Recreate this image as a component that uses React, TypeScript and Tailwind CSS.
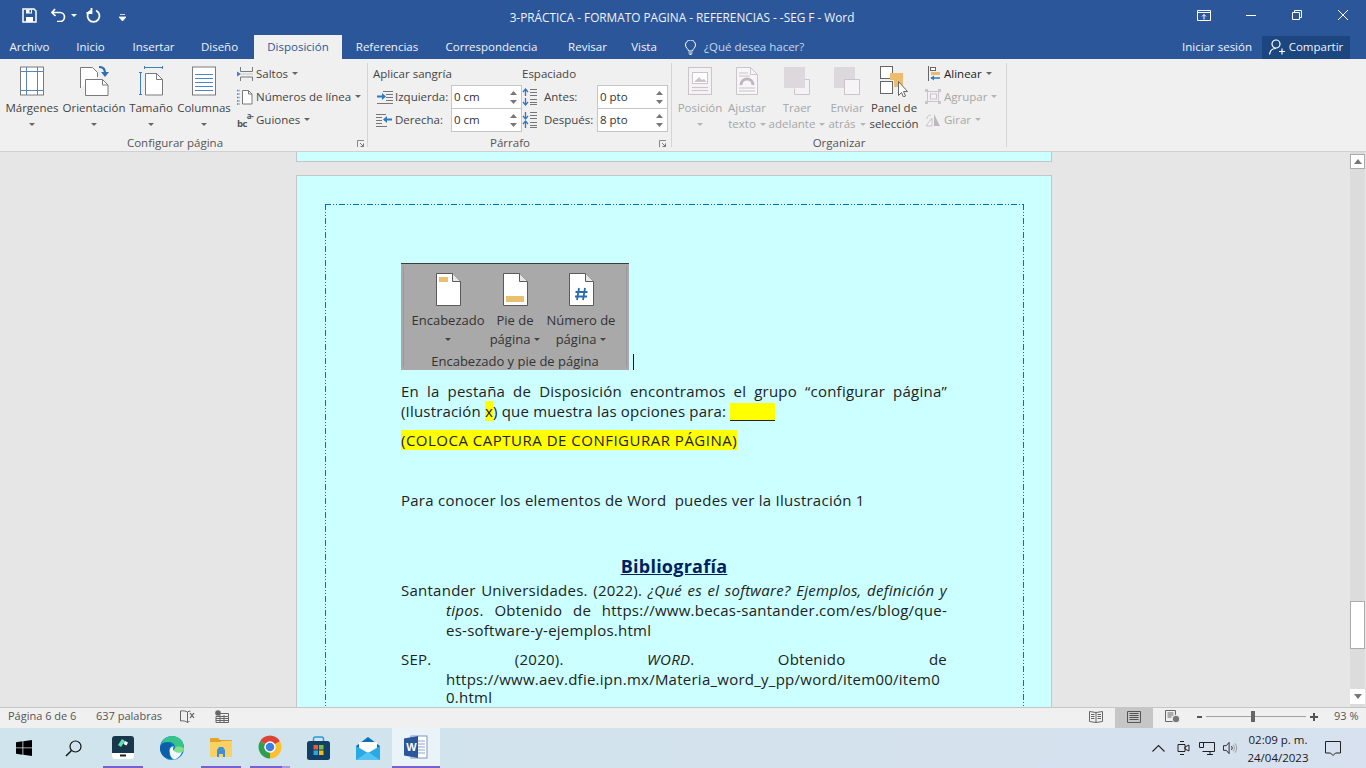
import React from "react";

const Caret = ({ color = "#666" }: { color?: string }) => (
  <svg width="6" height="3" viewBox="0 0 6 3" className="inline-block shrink-0">
    <path d="M0 0h6L3 3z" fill={color} />
  </svg>
);

// ---- ribbon icons ----
const MarginsIcon = () => (
  <svg width="24" height="30" viewBox="0 0 24 30" fill="none">
    <rect x="0.5" y="1" width="23" height="28" fill="#fff" stroke="#7a7a7a" />
    <path d="M6.5 1v28M17.5 1v28M0 5.5h24M0 24.5h24" stroke="#5b87b8" />
  </svg>
);
const OrientationIcon = () => (
  <svg width="30" height="30" viewBox="0 0 30 30" fill="none">
    <path d="M1.500 22V1.500h12l5 5V11" stroke="#7a7a7a" fill="#fff" />
    <path d="M6.500 29.500V13.500h17l5.500 5.500v10.500z" fill="#fff" stroke="#7a7a7a" />
    <path d="M23.500 13.500v5.500h5.500" stroke="#7a7a7a" />
    <path d="M20 1c4 0 6 2 6 6" stroke="#2f6fb5" strokeWidth="2.200" />
    <path d="M22 6h8l-4 5z" fill="#2f6fb5" />
  </svg>
);
const SizeIcon = () => (
  <svg width="25" height="30" viewBox="0 0 25 30" fill="none">
    <path d="M5.500 1.500h18M5.500 0v3M23.500 0v3M1.500 6v23M0 6.500h3M0 28.500h3" stroke="#3f7fc0" />
    <path d="M6.500 7.500h11l6 6v15.500h-17z" fill="#fff" stroke="#7a7a7a" />
    <path d="M17.500 7.500v6h6" stroke="#7a7a7a" />
  </svg>
);
const ColumnsIcon = () => (
  <svg width="24" height="30" viewBox="0 0 24 30" fill="none">
    <rect x="0.500" y="1" width="23" height="28" fill="#fff" stroke="#7a7a7a" />
    <path d="M3 8.500h18M3 12.500h18M3 16.500h18M3 20.500h18M3 24.500h18" stroke="#4d86c4" />
  </svg>
);
const BreaksIcon = () => (
  <svg width="16" height="16" viewBox="0 0 16 16" fill="none">
    <path d="M3.500 1v4.500h12V1M3.500 15v-4h12v4" stroke="#7a7a7a" />
    <path d="M0 5.500l4 2.500-4 2.500z" fill="#3f7fc0" />
    <path d="M4 8h12" stroke="#c8c8c8" />
  </svg>
);
const LineNumbersIcon = () => (
  <svg width="16" height="16" viewBox="0 0 16 16" fill="none">
    <path d="M0 1.500h3M0 5h3M0 8.500h3M0 12h3M0 15h3" stroke="#3f7fc0" strokeDasharray="1.500 1" strokeWidth="1.400" />
    <path d="M5.500 1.500h6l3.500 3.500v10h-9.500z" fill="#fff" stroke="#7a7a7a" />
    <path d="M11.500 1.500v3.500h3.500" stroke="#7a7a7a" />
  </svg>
);
const HyphenMark = () => (
  <div className="w-[17px] h-[16px] flex font-bold text-[#555] tracking-tighter">
    <span className="self-end text-[9.5px] leading-[8px]">bc</span>
    <span className="self-start text-[8px] leading-[8px]">a-</span>
  </div>
);
const IndentLeftIcon = () => (
  <svg width="17" height="14" viewBox="0 0 17 14" fill="none">
    <path d="M7 1.500h10M10 4.500h7M10 7.500h7M10 10.500h7M1 13.500h16" stroke="#777" />
    <path d="M1 6.500h6" stroke="#2f78c2" strokeWidth="2" />
    <path d="M6 3l4 3.500L6 10z" fill="#2f78c2" />
  </svg>
);
const IndentRightIcon = () => (
  <svg width="17" height="14" viewBox="0 0 17 14" fill="none">
    <path d="M0 1.500h10M0 4.500h6M0 7.500h6M0 10.500h6M0 13.500h11" stroke="#777" />
    <path d="M10 6.500h6" stroke="#2f78c2" strokeWidth="2" />
    <path d="M11 3L7 6.500l4 3.500z" fill="#2f78c2" />
  </svg>
);
const SpaceIcon = ({ flip }: { flip?: boolean }) => (
  <svg width="16" height="18" viewBox="0 0 16 18" fill="none">
    {flip ? (
      <path d="M3.500 1v6M1 5l2.500 3L6 5M3.500 11v6M1 13l2.500-3L6 13" stroke="#2f78c2" strokeWidth="1.300" />
    ) : (
      <path d="M3.500 2v6M1 4l2.500-3L6 4M3.500 10v6M1 14l2.500 3L6 14" stroke="#2f78c2" strokeWidth="1.300" />
    )}
    <path d="M8 1.500h7M8 4.500h7M8 7.500h7M8 11.500h7M8 14.500h7M8 16.500h7" stroke="#777" />
  </svg>
);
const Spin = () => (
  <div className="flex flex-col items-center gap-[5px] w-[13px]">
    <svg width="7" height="4" viewBox="0 0 7 4"><path d="M0 4h7L3.500 0z" fill="#777" /></svg>
    <svg width="7" height="4" viewBox="0 0 7 4"><path d="M0 0h7L3.500 4z" fill="#777" /></svg>
  </div>
);
const PositionIcon = () => (
  <svg width="24" height="28" viewBox="0 0 24 28" fill="none">
    <rect x="0.500" y="0.500" width="23" height="27" fill="#f4f2f4" stroke="#c9c5c9" />
    <rect x="4.500" y="5.500" width="15" height="11" fill="#fff" stroke="#c9c5c9" />
    <path d="M6 15l5-5 3 3 2-1 3 3z" fill="#c9c5c9" />
    <path d="M4 20.500h16M4 23.500h16" stroke="#c9c5c9" />
  </svg>
);
const WrapIcon = () => (
  <svg width="22" height="28" viewBox="0 0 22 28" fill="none">
    <path d="M0.500 0.500h14l7 7v20h-21z" fill="#f7f5f7" stroke="#c9c5c9" />
    <path d="M14.500 0.500v7h7" stroke="#c9c5c9" />
    <path d="M3 6h9M3 9h11M3 21h16M3 24h16" stroke="#c9c5c9" />
    <path d="M5 18c0-8 12-8 12 0" stroke="#bdb8bd" strokeWidth="3" />
  </svg>
);
const ForwardIcon = () => (
  <svg width="26" height="28" viewBox="0 0 26 28" fill="none">
    <path d="M10.500 21.500v6h15v-15h-5" fill="#f4f2f4" stroke="#c9c5c9" />
    <rect x="0" y="0" width="21" height="21" fill="#dcd8dc" />
  </svg>
);
const BackwardIcon = () => (
  <svg width="26" height="28" viewBox="0 0 26 28" fill="none">
    <rect x="0" y="0" width="21" height="21" fill="#dcd8dc" />
    <rect x="10.500" y="12.500" width="15" height="15" fill="#f6f4f6" stroke="#c9c5c9" />
  </svg>
);
const SelectionIcon = () => (
  <svg width="28" height="31" viewBox="0 0 28 31" fill="none">
    <rect x="0.500" y="0.500" width="12" height="12" fill="#fff" stroke="#666" />
    <rect x="0.500" y="15.500" width="12" height="12" fill="#fff" stroke="#666" />
    <rect x="10" y="7" width="13" height="7" fill="#edbd6e" />
    <rect x="14" y="7" width="9" height="14" fill="#edbd6e" />
    <path d="M18.500 15.500v14l3-3 2 4.500 2-1-2-4.500h4z" fill="#fff" stroke="#666" />
  </svg>
);
const AlignIcon = () => (
  <svg className="ml-[3px]" width="13" height="15" viewBox="0 0 13 15" fill="none">
    <path d="M0.500 0v15" stroke="#666" />
    <rect x="2.500" y="1.500" width="5" height="3" fill="#fff" stroke="#666" />
    <rect x="3" y="6" width="9" height="3" fill="#edbd6e" />
    <path d="M3 12h9" stroke="#2f78c2" strokeWidth="1.500" />
    <path d="M6 9.500L2.500 12 6 14.500z" fill="#2f78c2" />
  </svg>
);
const GroupIcon = () => (
  <svg width="16" height="15" viewBox="0 0 16 15" fill="none">
    <rect x="2.500" y="2.500" width="11" height="10" stroke="#c9c5c9" />
    <rect x="5.500" y="5" width="6" height="5" fill="#f4f2f4" stroke="#c9c5c9" />
    <path d="M0 0h3v3H0zM13 0h3v3h-3zM0 12h3v3H0zM13 12h3v3h-3z" fill="#c9c5c9" />
  </svg>
);
const RotateIcon = () => (
  <svg width="16" height="14" viewBox="0 0 16 14" fill="none">
    <path d="M1 13L7 5v8z" fill="#f4f2f4" stroke="#c9c5c9" />
    <path d="M9 1v12h6z" fill="#bdb8bd" />
    <path d="M2 6c0-3 2-4 4-4" stroke="#c9c5c9" />
  </svg>
);
const Launcher = () => (
  <svg width="7" height="7" viewBox="0 0 7 7" fill="none">
    <path d="M0.500 7V0.500H7" stroke="#8a8a8a" />
    <path d="M3 3l3.500 3.500M6.500 3.500v3h-3" stroke="#777" />
  </svg>
);

// ---- document picture icons ----
const HeaderPage = ({ kind }: { kind: "top" | "bottom" | "hash" }) => (
  <svg width="25" height="33" viewBox="0 0 25 33" fill="none">
    <path d="M0.500 0.500h16l8 8v24h-24z" fill="#fff" stroke="#5a5a5a" />
    <path d="M16.500 0.500v8h8" fill="#e8e8e8" stroke="#5a5a5a" />
    {kind === "top" && <rect x="3" y="4" width="9" height="5" fill="#e9c06f" />}
    {kind === "bottom" && <rect x="3" y="23" width="18" height="6" fill="#e9c06f" />}
    {kind === "hash" && (
      <path d="M10 15l-2 12M16 15l-2 12M6.500 19h12M6 23.500h12" stroke="#2b6cb0" strokeWidth="1.800" />
    )}
  </svg>
);

// ---- task bar icons ----
const WinLogo = () => (
  <svg width="16" height="16" viewBox="0 0 16 16"><path d="M0 2.200L6.500 1.300v6.200H0zM7.300 1.200L16 0v7.500H7.300zM0 8.300h6.500v6.400L0 13.800zM7.300 8.300H16V16l-8.700-1.200z" fill="#000" /></svg>
);
const SearchIcon = () => (
  <svg width="17" height="17" viewBox="0 0 17 17" fill="none">
    <circle cx="10.500" cy="6.500" r="5.500" stroke="#111" strokeWidth="1.200" />
    <path d="M6.500 10.500L1 16" stroke="#111" strokeWidth="1.500" />
  </svg>
);
const FilmoraIcon = () => (
  <svg width="22" height="23" viewBox="0 0 22 23">
    <rect width="22" height="22" rx="3" fill="#16384a" />
    <path d="M0 17h22v3a3 3 0 0 1-3 3H3a3 3 0 0 1-3-3z" fill="#fff" />
    <path d="M10 3l3 2-4 6-3-2z" fill="#5fe3b4" />
    <path d="M13 5l3 1.500-1.500 3-3-1.500z" fill="#fff" />
    <rect x="8" y="18.500" width="6" height="2" fill="#222" />
  </svg>
);
const EdgeIcon = () => (
  <svg width="24" height="24" viewBox="0 0 24 24">
    <circle cx="12" cy="12" r="12" fill="#0f78c6" />
    <path d="M1 9C3 2 9 0 12 0c7 0 12 5 12 12 0 3-2 5-5 5-3 0-5-1-5-3 0-1 1-1 1-3 0-3-3-5-6-5C5 6 2 7 1 9z" fill="#35c58a" />
    <path d="M24 13c0 2-2 4-5 4s-5-1-5-3l1-2c3-3 8-1 9 1z" fill="#7fe08a" />
    <path d="M9.500 15c0-3 2-5 4.500-4.500-2 1.500-1 5 3 6 2 .5 4 .3 5-.2C20 21 16 24 12 24c-1 0-3-.5-3-.5C7 21 9 18 9.500 15z" fill="#fff" opacity="0.950" />
    <path d="M10 17c0 3 2 6 5 6.500-1 .3-2 .5-3 .5-2 0-3.500-.5-5-1.500C6 20 8 16 10 15z" fill="#1a9bd7" />
    <path d="M1 9C4 5 10 6 12 9c-2 1-3 3-3 6 0 3 1 6 3 8C5 23 0 18 0 12c0-1 .5-2 1-3z" fill="#0c5ea8" />
  </svg>
);
const FolderIcon = () => (
  <svg width="22" height="19" viewBox="0 0 22 19">
    <path d="M0 1a1 1 0 0 1 1-1h7l2 2h11a1 1 0 0 1 1 1v3H0z" fill="#e0a526" />
    <path d="M0 3h22v15a1 1 0 0 1-1 1H1a1 1 0 0 1-1-1z" fill="#fad165" />
    <path d="M0 3h9l1-1h1v2H0z" fill="#e0a526" />
    <path d="M7 12l2-3h4l2 3v7h-2v-3H9v3H7z" fill="#3d8fd6" />
  </svg>
);
const ChromeIcon = () => (
  <svg width="24" height="24" viewBox="0 0 48 48">
    <path d="M24 24L4.100 12.500A23 23 0 0 1 43.900 12.500z" fill="#db4437" />
    <path d="M24 24L43.900 12.500A23 23 0 0 1 24 47z" fill="#fbc02d" />
    <path d="M24 24L24 47A23 23 0 0 1 4.100 12.500z" fill="#2f9e4f" />
    <circle cx="24" cy="24" r="11.500" fill="#fff" />
    <circle cx="24" cy="24" r="8.500" fill="#3b7fe6" />
  </svg>
);
const StoreIcon = () => (
  <svg width="23" height="24" viewBox="0 0 23 24" fill="none">
    <path d="M6.500 5V3a2 2 0 0 1 2-2h6a2 2 0 0 1 2 2v2" stroke="#2a9bd8" strokeWidth="1.500" />
    <rect y="5" width="23" height="19" rx="2.500" fill="#123f66" />
    <rect x="6.500" y="9" width="4.500" height="4.500" fill="#f05a2a" />
    <rect x="12" y="9" width="4.500" height="4.500" fill="#7fba3c" />
    <rect x="6.500" y="14.500" width="4.500" height="4.500" fill="#2aa5e0" />
    <rect x="12" y="14.500" width="4.500" height="4.500" fill="#fbbc09" />
  </svg>
);
const MailIcon = () => (
  <svg width="24" height="23" viewBox="0 0 24 23">
    <path d="M12 0l12 9v14H0V9z" fill="#0d6fb8" />
    <path d="M3 5h18v9l-9 5-9-5z" fill="#fff" />
    <path d="M0 9l12 7 12-7v14H0z" fill="#29a9e6" />
    <path d="M0 23l12-8 12 8z" fill="#57c3f0" />
  </svg>
);
const WordIcon = () => (
  <svg width="24" height="24" viewBox="0 0 24 24">
    <rect x="7" y="1" width="16" height="22" fill="#fff" stroke="#7d97c0" />
    <path d="M14 6h7M14 9h7M14 12h7M14 15h7M14 18h7" stroke="#8aa4cd" />
    <path d="M0 3.500L14 1v22L0 20.500z" fill="#2b579a" />
    <text x="2.300" y="16" fill="#fff" fontSize="11" fontWeight="700" fontFamily="'Liberation Sans',sans-serif">W</text>
  </svg>
);

const Tab = ({ w, label, active }: { w: string; label: string; active?: boolean }) => (
  <div className={`${w} h-full flex items-center justify-center ${active ? "bg-[#f0f0f0] text-[#2b579a]" : "text-[#f0f3f8]"}`}>{label}</div>
);

const BigButton = ({ w, icon, lines, caret, disabled }: { w: string; icon: React.ReactNode; lines: [string, string?]; caret?: boolean; disabled?: boolean }) => {
  const caretColor = disabled ? "#b5b5b5" : "#666";
  return (
    <div className={`${w} shrink-0 flex flex-col items-center pt-[7px] ${disabled ? "text-[#a6a6a6]" : "text-[#444]"}`}>
      <div className="h-[30px] flex items-center justify-center">{icon}</div>
      <div className="mt-1 h-4 leading-4 whitespace-nowrap">{lines[0]}</div>
      <div className="h-4 leading-4 whitespace-nowrap flex items-center gap-1">
        {lines[1]}
        {caret && <Caret color={caretColor} />}
      </div>
    </div>
  );
};

const SmallRow = ({ icon, label, disabled, dark }: { icon: React.ReactNode; label: string; disabled?: boolean; dark?: boolean }) => (
  <div className={`h-[23px] flex items-center whitespace-nowrap ${disabled ? "text-[#a6a6a6]" : dark ? "text-[#222]" : "text-[#444]"}`}>
    <div className="w-[19px] flex items-center shrink-0">{icon}</div>
    <span>{label}</span>
    <span className="ml-1 flex"><Caret color={disabled ? "#b5b5b5" : "#666"} /></span>
  </div>
);

const SpinRow = ({ icon, label, value, labelW, iconW }: { icon: React.ReactNode; label: string; value: string; labelW: string; iconW: string }) => (
  <div className="h-[23px] flex items-center">
    <div className={`${iconW} flex items-center shrink-0`}>{icon}</div>
    <div className={`${labelW} shrink-0 whitespace-nowrap`}>{label}</div>
    <div className="w-[71px] h-[24px] -mb-px shrink-0 bg-white border border-[#c6c6c6] flex items-center justify-between pl-[2px] pr-[1px] text-[#333]">
      <span>{value}</span>
      <Spin />
    </div>
  </div>
);

const Line = ({ children, justify }: { children: React.ReactNode; justify?: boolean }) => (
  <div className={`whitespace-normal ${justify ? "text-justify [text-align-last:justify]" : ""}`}>{children}</div>
);

const PicButton = ({ kind, lines, caret, w }: { kind: "top" | "bottom" | "hash"; lines: [string, string?]; caret?: boolean; w: string }) => (
  <div className={`${w} flex flex-col items-center`}>
    <HeaderPage kind={kind} />
    <div className="mt-[5px] h-[19px] leading-[19px] whitespace-nowrap">{lines[0]}</div>
    <div className="h-[19px] leading-[19px] flex items-center gap-1 whitespace-nowrap">
      {lines[1]}
      {caret && <Caret color="#444" />}
    </div>
  </div>
);

export default function App() {
  return (
    <div className="w-[1366px] h-[768px] overflow-hidden flex flex-col font-['Open_Sans',sans-serif] text-[11.5px] bg-[#f0f0f0]">
      {/* title bar */}
      <div className="h-[35px] bg-[#2b579a] flex items-center text-[#f0f3f8] shrink-0">
        <div className="pl-[22px] flex items-center h-full -mt-[5px]">
          <svg width="15" height="15" viewBox="0 0 15 15" fill="none">
            <path d="M1 1h11l2 2v11H1z" stroke="#fff" strokeWidth="1.500" />
            <path d="M4 1.500h6v4H4zM4 9h7v5H4z" fill="#fff" />
            <rect x="7.500" y="2" width="1.500" height="2.500" fill="#2b579a" />
          </svg>
          <svg className="ml-[14px]" width="15" height="14" viewBox="0 0 15 14" fill="none">
            <path d="M4 1L1 4.500 4.500 8M1.500 4.500H9a4.500 4.500 0 0 1 0 9H6" stroke="#fff" strokeWidth="1.700" />
          </svg>
          <span className="ml-[5px] flex"><Caret color="#fff" /></span>
          <svg className="ml-[9px]" width="15" height="15" viewBox="0 0 15 15" fill="none">
            <path d="M5 2.500a6 6 0 1 0 5 0" stroke="#fff" strokeWidth="1.800" />
            <path d="M5.500 0v5H0.500" stroke="#fff" strokeWidth="1.800" />
          </svg>
          <svg className="ml-[18px] mt-1" width="7" height="7" viewBox="0 0 7 7"><path d="M1 0.500h5M0 3h7L3.500 7z" stroke="#fff" strokeWidth="0.800" fill="#fff" /></svg>
        </div>
        <div className="w-[1000px] ml-[56px] text-center text-[11.8px] whitespace-nowrap">3-PRÁCTICA - FORMATO PAGINA - REFERENCIAS - -SEG F - Word</div>
        <div className="ml-[15px] flex items-center -mt-[5px]">
          <svg width="14" height="11" viewBox="0 0 14 11" fill="none">
            <path d="M.5.500h13v10H.5zM.5 2.500h13" stroke="#fff" />
            <path d="M7 9.500V4.500M5 6.500l2-2 2 2" stroke="#fff" />
          </svg>
          <svg className="ml-[35px]" width="10" height="10" viewBox="0 0 10 10" fill="none"><path d="M0 5.500h10" stroke="#fff" /></svg>
          <svg className="ml-[36px]" width="10" height="10" viewBox="0 0 10 10" fill="none">
            <path d="M.5 2.500h7v7h-7zM2.500 2.500v-2h7v7h-2" stroke="#fff" />
          </svg>
          <svg className="ml-[36px]" width="10" height="10" viewBox="0 0 10 10" fill="none"><path d="M0 0l10 10M10 0L0 10" stroke="#fff" /></svg>
        </div>
      </div>
      {/* tabs */}
      <div className="h-[24px] bg-[#2b579a] flex items-stretch shrink-0 text-[11.5px]">
        <Tab w="w-[59px]" label="Archivo" />
        <Tab w="w-[63px]" label="Inicio" />
        <Tab w="w-[63px]" label="Insertar" />
        <Tab w="w-[69px]" label="Diseño" />
        <Tab w="w-[88px]" label="Disposición" active />
        <Tab w="w-[90px]" label="Referencias" />
        <Tab w="w-[119px]" label="Correspondencia" />
        <Tab w="w-[73px]" label="Revisar" />
        <Tab w="w-[40px]" label="Vista" />
        <div className="ml-[21px] flex items-center gap-2 text-[#c9d6ea]">
          <svg width="11" height="15" viewBox="0 0 11 15" fill="none">
            <path d="M3.500 11c0-2-3-3-3-6a5 5 0 0 1 10 0c0 3-3 4-3 6zM3.500 13h4M4.500 14.500h2" stroke="#fff" />
          </svg>
          <span>¿Qué desea hacer?</span>
        </div>
        <div className="ml-auto flex items-center mr-[16px] text-[#f0f3f8]">
          <span className="mr-[10px]">Iniciar sesión</span>
          <div className="w-[88px] h-[23px] bg-[#1c4680] flex items-center justify-center gap-[4px]">
            <svg width="16" height="16" viewBox="0 0 16 16" fill="none">
              <circle cx="7" cy="5" r="4" stroke="#fff" strokeWidth="1.200" />
              <path d="M0.500 15.500c.5-4 3-6 6.500-6M10 12.500h6M13 9.500v6" stroke="#fff" strokeWidth="1.200" />
            </svg>
            <span>Compartir</span>
          </div>
        </div>
      </div>

      {/* ribbon */}
      <div className="h-[93px] shrink-0 bg-[#f0f0f0] border-b border-[#d0d0d0] flex text-[11.5px] text-[#444]">
        {/* Configurar página */}
        <div className="w-[367px] shrink-0 flex flex-col">
          <div className="h-[76px] flex pl-[4px]">
            <BigButton w="w-[56px]" icon={<MarginsIcon />} lines={["Márgenes"]} caret />
            <BigButton w="w-[68px]" icon={<OrientationIcon />} lines={["Orientación"]} caret />
            <BigButton w="w-[46px]" icon={<SizeIcon />} lines={["Tamaño"]} caret />
            <BigButton w="w-[60px]" icon={<ColumnsIcon />} lines={["Columnas"]} caret />
            <div className="pl-[3px] pt-[3px]">
              <SmallRow icon={<BreaksIcon />} label="Saltos" />
              <SmallRow icon={<LineNumbersIcon />} label="Números de línea" />
              <SmallRow icon={<HyphenMark />} label="Guiones" />
            </div>
          </div>
          <div className="flex items-center h-[16px]">
            <div className="w-[350px] text-center text-[#555]">Configurar página</div>
            <div className="ml-[7px] flex"><Launcher /></div>
          </div>
        </div>
        <div className="w-px my-1 bg-[#d4d4d4] shrink-0" />
        {/* Párrafo */}
        <div className="w-[303px] shrink-0 flex flex-col">
          <div className="h-[76px] flex pl-[5px] pt-[3px]">
            <div className="w-[149px] shrink-0">
              <div className="h-[23px] flex items-center">Aplicar sangría</div>
              <SpinRow icon={<IndentLeftIcon />} iconW="w-[22px] pl-[3px]" labelW="w-[56px]" label="Izquierda:" value="0 cm" />
              <SpinRow icon={<IndentRightIcon />} iconW="w-[22px] pl-[3px]" labelW="w-[56px]" label="Derecha:" value="0 cm" />
            </div>
            <div>
              <div className="h-[23px] flex items-center">Espaciado</div>
              <SpinRow icon={<SpaceIcon />} iconW="w-[22px]" labelW="w-[53px]" label="Antes:" value="0 pto" />
              <SpinRow icon={<SpaceIcon flip />} iconW="w-[22px]" labelW="w-[53px]" label="Después:" value="8 pto" />
            </div>
          </div>
          <div className="flex items-center h-[16px]">
            <div className="w-[284px] text-center text-[#555]">Párrafo</div>
            <div className="ml-[7px] flex"><Launcher /></div>
          </div>
        </div>
        <div className="w-px my-1 bg-[#d4d4d4] shrink-0" />
        {/* Organizar */}
        <div className="w-[334px] shrink-0 flex flex-col">
          <div className="h-[76px] flex pl-[5px]">
            <BigButton w="w-[46px]" icon={<PositionIcon />} lines={["Posición"]} caret disabled />
            <BigButton w="w-[48px]" icon={<WrapIcon />} lines={["Ajustar", "texto"]} caret disabled />
            <BigButton w="w-[52px]" icon={<ForwardIcon />} lines={["Traer", "adelante"]} caret disabled />
            <BigButton w="w-[48px]" icon={<BackwardIcon />} lines={["Enviar", "atrás"]} caret disabled />
            <BigButton w="w-[46px]" icon={<SelectionIcon />} lines={["Panel de", "selección"]} />
            <div className="pl-[8px] pt-[3px]">
              <SmallRow icon={<AlignIcon />} label="Alinear" dark />
              <SmallRow icon={<GroupIcon />} label="Agrupar" disabled />
              <SmallRow icon={<RotateIcon />} label="Girar" disabled />
            </div>
          </div>
          <div className="h-[16px] leading-4 text-center text-[#555]">Organizar</div>
        </div>
        <div className="w-px my-1 bg-[#d4d4d4] shrink-0" />
      </div>

      {/* document area */}
      <div className="h-[555px] shrink-0 bg-[#e6e6e6] flex overflow-hidden">
        <div className="w-[1350px] shrink-0 pl-[296px]">
          <div className="w-[756px] h-[10px] bg-[#ccffff] border-x border-b border-[#c6c6c6]" />
          <div className="mt-[13px] w-[756px] h-[560px] bg-[#ccffff] border border-[#c6c6c6] pt-[28px] pl-[28px]">
            <div className="w-[699px] h-[600px] pl-[76px] pt-[59px] text-[15px] tracking-[0.25px] leading-[20px] text-[#222] [background:repeating-linear-gradient(90deg,#0070c0_0_6px,transparent_6px_8px,#0070c0_8px_9px,transparent_9px_11px,#0070c0_11px_12px,transparent_12px_14px)_top/100%_1px_no-repeat,repeating-linear-gradient(180deg,#0070c0_0_6px,transparent_6px_8px,#0070c0_8px_9px,transparent_9px_11px,#0070c0_11px_12px,transparent_12px_14px)_left/1px_100%_no-repeat,repeating-linear-gradient(180deg,#0070c0_0_6px,transparent_6px_8px,#0070c0_8px_9px,transparent_9px_11px,#0070c0_11px_12px,transparent_12px_14px)_right/1px_100%_no-repeat]">
              <div className="flex items-end">
                <div className="w-[228px] h-[107px] bg-[#a9a9a9] border-t border-[#3c3c3c] flex flex-col pt-[2px] pb-[3px] px-[2px] text-[13px] tracking-normal text-[#333]">
                  <div className="flex-1 flex flex-col border-x border-[#999]">
                    <div className="flex-1 flex pl-[5px] pt-[7px]">
                      <PicButton w="w-[78px]" kind="top" lines={["Encabezado"]} caret />
                      <PicButton w="w-[56px]" kind="bottom" lines={["Pie de", "página"]} caret />
                      <PicButton w="w-[76px]" kind="hash" lines={["Número de", "página"]} caret />
                    </div>
                    <div className="h-[15px] leading-[18px] text-center">Encabezado y pie de página</div>
                  </div>
                </div>
                <div className="ml-[4px] w-px h-4 bg-[#300]" />
              </div>
              <div className="w-[546px] mt-[11px]">
                <Line justify>En la pestaña de Disposición encontramos el grupo “configurar página”</Line>
                <div className="tracking-[0.18px]">
                  (Ilustración <span className="bg-[#ffff00]">x</span>) que muestra las opciones para:{" "}
                  <span className="inline-block w-[45px] h-[18px] align-[-4px] bg-[#ffff00] border-b border-[#222]" />
                </div>
                <div className="mt-[9px] tracking-[0.5px]"><span className="bg-[#ffff00]">(COLOCA CAPTURA DE CONFIGURAR PÁGINA)</span></div>
                <div className="mt-[40px]">Para conocer los elementos de Word&nbsp; puedes ver la Ilustración 1</div>
                <div className="mt-[44px] h-[26px] leading-[25px] text-center text-[18px] font-bold underline text-[#002060]">Bibliografía</div>
                <Line justify><span>Santander Universidades. (2022). <i>¿Qué es el software? Ejemplos, definición y</i></span></Line>
                <div className="pl-[45px]">
                  <Line justify><i>tipos</i>. Obtenido de https://www.becas-santander.com/es/blog/que-</Line>
                  <Line>es-software-y-ejemplos.html</Line>
                </div>
                <div className="mt-[9px]">
                  <Line justify>SEP. (2020). <i>WORD</i>. Obtenido de</Line>
                  <div className="pl-[45px]">
                    <Line>https://www.aev.dfie.ipn.mx/Materia_word_y_pp/word/item00/item0</Line>
                    <div className="leading-[17px]">0.html</div>
                  </div>
                </div>
              </div>
            </div>
          </div>
        </div>
        {/* scrollbar */}
        <div className="w-[15px] h-full bg-[#dcdcdc] flex flex-col items-center pt-[2px] pb-[3px]">
          <div className="w-[15px] h-[15px] bg-white border border-[#ababab] flex items-center justify-center">
            <svg width="8" height="5" viewBox="0 0 8 5"><path d="M0 5h8L4 0z" fill="#777" /></svg>
          </div>
          <div className="mt-[432px] w-[15px] h-[48px] bg-white border border-[#ababab]" />
          <div className="mt-auto w-[15px] h-[15px] bg-white flex items-center justify-center">
            <svg width="8" height="5" viewBox="0 0 8 5"><path d="M0 0h8L4 5z" fill="#777" /></svg>
          </div>
        </div>
      </div>

      {/* status bar */}
      <div className="h-[21px] shrink-0 bg-[#f0f0f0] border-t border-[#c6c6c6] flex items-stretch text-[11px] text-[#555]">
        <div className="flex items-center pb-[3px]">
          <span className="ml-[8px] w-[88px]">Página 6 de 6</span>
          <span className="w-[84px]">637 palabras</span>
          <svg width="15" height="13" viewBox="0 0 15 13" fill="none">
            <path d="M7.500 2C6 1 3 .5 .5 1v10c2.500-.5 5 0 7 1.500V2M7.500 2c1-.7 2-1 3-1M7.500 12.500c.5-.5 1-.7 2-1" stroke="#666" />
            <path d="M10 3l4 5M14 3l-4 5" stroke="#555" strokeWidth="1.200" />
          </svg>
          <svg className="ml-[20px]" width="14" height="13" viewBox="0 0 14 13" fill="none">
            <circle cx="3" cy="3" r="2.800" fill="#666" />
            <path d="M1 6.500h12.500v6H1zM1 8.500h12.500M1 10.500h12.500M5 5v8M9 5v8M5 3.500h8.500V6" stroke="#666" />
          </svg>
        </div>
        <div className="ml-auto flex items-stretch">
          <div className="flex items-center pb-[3px]">
            <svg width="14" height="13" viewBox="0 0 14 13" fill="none">
              <path d="M.5 1.500l6.500 1 6.500-1v10l-6.500 1-6.500-1zM7 2.500v10M2 4.500h3.500M2 6.500h3.500M2 8.500h3.500M8.500 4.500H12M8.500 6.500H12M8.500 8.500H12" stroke="#666" />
            </svg>
          </div>
          <div className="ml-[12px] w-[38px] bg-[#c6c6c6] flex items-center justify-center pb-[3px]">
            <svg width="14" height="12" viewBox="0 0 14 12" fill="none">
              <path d="M.5.500h13v11H.5zM2.500 2.500h9M2.500 4.500h9M2.500 6.500h9M2.500 8.500h9" stroke="#555" />
            </svg>
          </div>
          <div className="flex items-center pb-[3px]">
            <svg className="ml-[12px]" width="15" height="13" viewBox="0 0 15 13" fill="none">
              <path d="M.5.500h10v11H.5zM2.500 3h6M2.500 5h6M2.500 7h4" stroke="#666" />
              <circle cx="11" cy="9" r="3.800" fill="#777" stroke="#f0f0f0" />
            </svg>
            <div className="ml-[17px] w-[5px] h-[2px] bg-[#555]" />
            <div className="ml-[4px] w-[100px] h-[1px] bg-[#a0a0a0] flex items-center">
              <div className="ml-[45px] w-[4px] h-[11px] bg-[#666] shrink-0" />
            </div>
            <svg className="ml-[4px]" width="8" height="8" viewBox="0 0 8 8"><path d="M0 4h8M4 0v8" stroke="#555" strokeWidth="2" /></svg>
            <span className="ml-[16px] mr-[8px] w-[24px] whitespace-nowrap">93 %</span>
          </div>
        </div>
      </div>

      {/* task bar */}
      <div className="flex-1 bg-gradient-to-r from-[#cfe4ec] to-[#d7e1ef] flex items-stretch">
        <div className="w-[48px] flex items-center justify-center"><WinLogo /></div>
        <div className="w-[50px] flex items-center justify-center"><SearchIcon /></div>
        <div className="w-[49px] flex flex-col items-center"><div className="flex-1 flex items-center"><FilmoraIcon /></div><div className="w-[40px] h-[2px] bg-[#7a5fcf]" /></div>
        <div className="w-[49px] flex items-center justify-center"><EdgeIcon /></div>
        <div className="w-[49px] flex flex-col items-center"><div className="flex-1 flex items-center"><FolderIcon /></div><div className="w-[40px] h-[2px] bg-[#7a5fcf]" /></div>
        <div className="w-[49px] flex flex-col items-center"><div className="flex-1 flex items-center"><ChromeIcon /></div><div className="w-[40px] h-[2px] bg-gradient-to-r from-[#7a5fcf] from-[80%] to-[#a99be0] to-[80%]" /></div>
        <div className="w-[49px] flex items-center justify-center"><StoreIcon /></div>
        <div className="w-[49px] flex items-center justify-center"><MailIcon /></div>
        <div className="w-[48px] bg-[#e9f3f8] flex flex-col items-center"><div className="flex-1 flex items-center"><WordIcon /></div><div className="w-full h-[2px] bg-[#7a5fcf]" /></div>
        <div className="ml-auto flex items-center text-[11.5px] text-[#1a1a1a]">
          <svg width="13" height="8" viewBox="0 0 13 8" fill="none"><path d="M.5 7.500l6-6 6 6" stroke="#222" strokeWidth="1.100" /></svg>
          <svg className="ml-[12px]" width="13" height="16" viewBox="0 0 13 16" fill="none">
            <path d="M1 4.500v7h7v-7zM8 7l4-2v6L8 9zM3 1.500h4M3 14.500h4" stroke="#222" />
          </svg>
          <svg className="ml-[9px]" width="16" height="14" viewBox="0 0 16 14" fill="none">
            <path d="M3.500 1.500h12v9h-12M8 13.500h6M11 10.500v3M.5 1.500h4v5h-4z" stroke="#222" />
          </svg>
          <svg className="ml-[8px]" width="15" height="14" viewBox="0 0 16 14" fill="none">
            <path d="M.5 4.500h3l3-3.500v12l-3-3.500h-3z" stroke="#222" />
            <path d="M9 5c1 1 1 3 0 4" stroke="#222" />
            <path d="M11 3.500c1.500 2 1.500 5 0 7M13 2c2 3 2 7 0 10" stroke="#999" />
          </svg>
          <div className="w-[80px] text-center leading-[18px] pt-px">
            <div className="whitespace-nowrap">02:09 p. m.</div>
            <div className="whitespace-nowrap">24/04/2023</div>
          </div>
          <svg className="ml-[7px] mr-[25px]" width="16" height="15" viewBox="0 0 16 15" fill="none">
            <path d="M.5.500h15v11.500h-5l-2.500 2.500-2.500-2.500h-5z" stroke="#222" />
          </svg>
        </div>
      </div>
    </div>
  );
}
